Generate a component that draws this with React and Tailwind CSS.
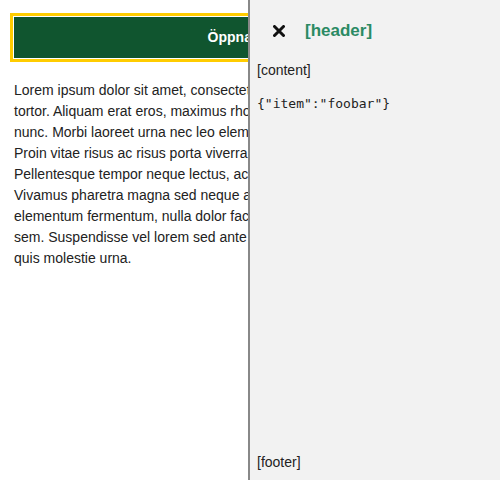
import React from "react";

const lines = [
  "Lorem ipsum dolor sit amet, consectetur adipiscing elit. Sed eget mi",
  "tortor. Aliquam erat eros, maximus rhoncus lacinia vitae, dictum in",
  "nunc. Morbi laoreet urna nec leo elementum, sed vehicula turpis.",
  "Proin vitae risus ac risus porta viverra. Donec sit amet nisl.",
  "Pellentesque tempor neque lectus, ac convallis arcu gravida eget.",
  "Vivamus pharetra magna sed neque aliquet, at tincidunt nibh",
  "elementum fermentum, nulla dolor facilisis mi, sit amet tempus ex",
  "sem. Suspendisse vel lorem sed ante dignissim pulvinar, sed ac",
  "quis molestie urna.",
];

export default function App() {
  return (
    <div className="relative min-h-screen bg-white font-['Liberation_Sans',Arial,sans-serif] text-[#222]">
      <main className="px-[14px] pt-[17px]">
        <button className="h-[41px] w-full bg-[#10552f] text-[14px] font-bold text-white outline outline-[3px] outline-offset-[1px] outline-[#ffcc00]">
          Öppna meny
        </button>
        <p className="mt-[22px] text-[14px] leading-[21px] text-[#222]">
          {lines.map((l, i) => (
            <React.Fragment key={i}>
              {l}
              {i < lines.length - 1 && <br />}
            </React.Fragment>
          ))}
        </p>
      </main>

      <aside className="fixed right-0 top-0 flex h-screen w-[252px] flex-col border-l-2 border-[#888888] bg-[#f2f2f2]">
        <header className="flex h-[62px] shrink-0 items-center pl-[23px]">
          <button aria-label="Stäng" className="flex h-[12px] w-[12px] items-center justify-center">
            <svg width="12" height="12" viewBox="0 0 12 12">
              <path d="M1.5 1.5 L10.5 10.5 M10.5 1.5 L1.5 10.5" stroke="#111" strokeWidth="3" strokeLinecap="round" />
            </svg>
          </button>
          <h2 className="ml-[20px] text-[17px] font-bold leading-[20px] text-[#2b8a64]">[header]</h2>
        </header>
        <div className="flex-1 px-[7px]">
          <div className="text-[14px] leading-[16px] text-[#222]">[content]</div>
          <pre className="mt-[17px] font-['DejaVu_Sans_Mono',monospace] text-[13px] leading-[17px] text-[#222]">{'{"item":"foobar"}'}</pre>
        </div>
        <footer className="px-[7px] pb-[10px] text-[14px] leading-[16px] text-[#222]">[footer]</footer>
      </aside>
    </div>
  );
}
